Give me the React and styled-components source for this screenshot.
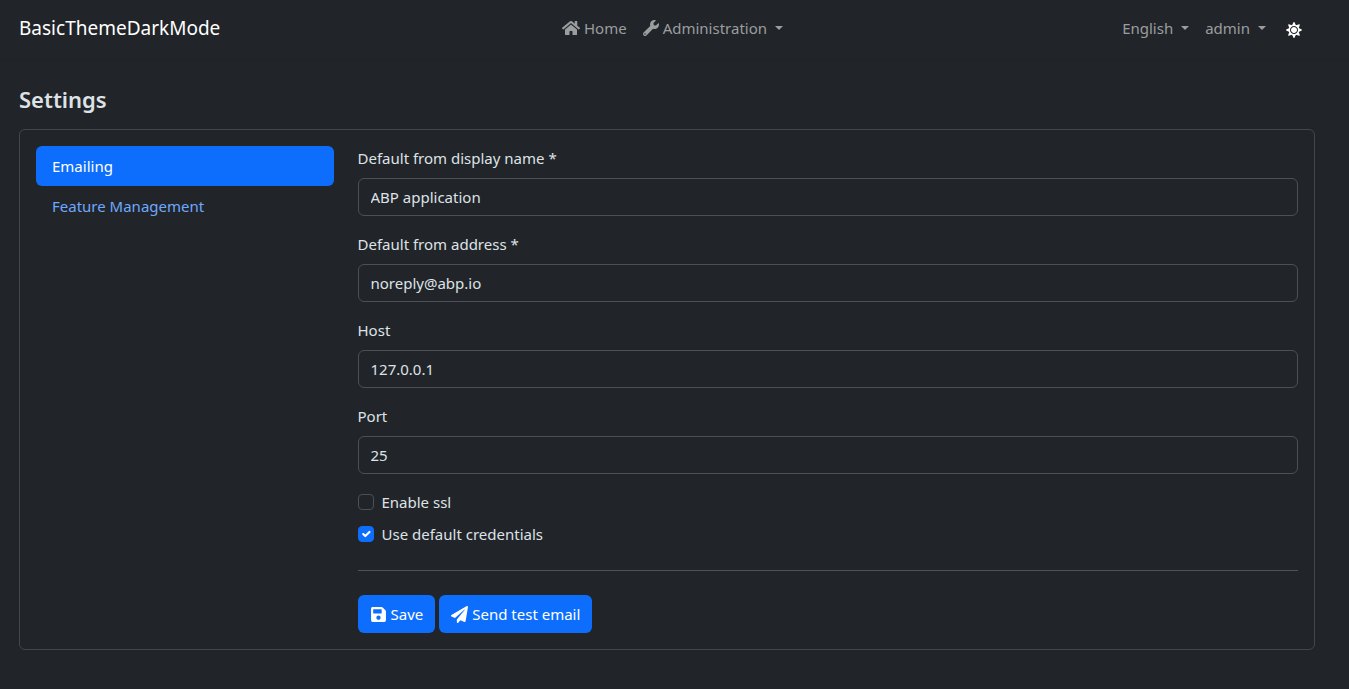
import React from "react";
import styled, { createGlobalStyle } from "styled-components";
import { FaHome, FaWrench, FaSave, FaPaperPlane, FaSun } from "react-icons/fa";

const GlobalStyle = createGlobalStyle`
  *, *::before, *::after { box-sizing: border-box; }
  body {
    margin: 0;
    background: #212529;
    color: #dee2e6;
    font-family: "Segoe UI", "Noto Sans", sans-serif;
    font-size: 15px;
    line-height: 24px;
  }
  input, button { font: inherit; }
`;

const Navbar = styled.header`
  display: grid;
  grid-template-columns: 1fr auto 1fr;
  align-items: center;
  height: 60px;
  padding: 0 23px 4px 19px;
  border-bottom: 1px solid #1f2327;
`;

const Brand = styled.a`
  color: #fff;
  font-size: 19px;
  line-height: 30px;
  text-decoration: none;
`;

const NavGroup = styled.nav`
  display: flex;
  align-items: center;
  justify-content: ${(p) => (p.$end ? "flex-end" : "center")};
  gap: 16px;
`;

const navItem = `
  display: flex;
  align-items: center;
  padding: 0;
  border: 0;
  background: none;
  color: #9b9d9f;
  text-decoration: none;
  cursor: pointer;
`;

const NavLink = styled.a`
  ${navItem}
  gap: 4px;
`;

const NavToggle = styled.button`
  ${navItem}
  gap: 4px;

  &::after {
    content: "";
    margin-left: 4px;
    border-top: 4px solid;
    border-left: 4px solid transparent;
    border-right: 4px solid transparent;
  }
`;

const ThemeButton = styled.button`
  ${navItem}
  padding: 4px 24px 0 4px;
  color: #fff;
`;

const Page = styled.main`
  padding: 24px 34px 24px 19px;
`;

const Title = styled.h1`
  margin: 0 0 14px;
  font-size: 22px;
  font-weight: 600;
  line-height: 31px;
`;

const Card = styled.section`
  display: grid;
  grid-template-columns: repeat(12, minmax(0, 1fr));
  column-gap: 24px;
  padding: 16px;
  border: 1px solid #43474b;
  border-radius: 6px;
`;

const Tabs = styled.nav`
  grid-column: span 3;
`;

const Tab = styled.a`
  display: block;
  padding: 8px 16px;
  border-radius: 6px;
  background: ${(p) => (p.$active ? "#0d6efd" : "transparent")};
  color: ${(p) => (p.$active ? "#fff" : "#6ea8fe")};
  text-decoration: none;
`;

const Form = styled.form`
  grid-column: span 9;
`;

const Field = styled.div`
  margin-bottom: 16px;
`;

const Label = styled.label`
  display: block;
  margin-bottom: 8px;
`;

const TextInput = styled.input`
  display: block;
  width: 100%;
  height: 38px;
  padding: 6px 12px;
  border: 1px solid #495057;
  border-radius: 6px;
  background: #212529;
  color: #dee2e6;
  outline: none;

  &:focus { border-color: #86b7fe; }
`;

const CheckRow = styled.div`
  display: flex;
  align-items: center;
  gap: 8px;
  margin-bottom: 8px;
`;

const CheckControl = styled.span`
  display: grid;

  > * { grid-area: 1 / 1; }
`;

const Checkbox = styled.input`
  appearance: none;
  width: 16px;
  height: 16px;
  margin: 0;
  border: 1px solid #495057;
  border-radius: 4px;
  background: #212529;

  &:checked {
    border-color: #0d6efd;
    background: #0d6efd;
  }

  & + svg { visibility: hidden; }
  &:checked + svg { visibility: visible; }
`;

const CheckMark = styled.svg`
  width: 14px;
  height: 14px;
  place-self: center;
  pointer-events: none;
`;

const Divider = styled.hr`
  margin: 24px 0;
  border: 0;
  border-top: 1px solid #505458;
`;

const Actions = styled.div`
  display: flex;
  gap: 4px;
`;

const Button = styled.button`
  display: flex;
  align-items: center;
  gap: 4px;
  height: 38px;
  padding: 0 12px;
  border: 0;
  border-radius: 6px;
  background: #0d6efd;
  color: #fff;
  cursor: pointer;
`;

const fields = [
  { id: "display-name", label: "Default from display name *", value: "ABP application" },
  { id: "address", label: "Default from address *", value: "noreply@abp.io" },
  { id: "host", label: "Host", value: "127.0.0.1" },
  { id: "port", label: "Port", value: "25" },
];

const checks = [
  { id: "ssl", label: "Enable ssl", checked: false },
  { id: "credentials", label: "Use default credentials", checked: true },
];

export default function App() {
  return (
    <>
      <GlobalStyle />
      <Navbar>
        <div>
          <Brand href="#">BasicThemeDarkMode</Brand>
        </div>
        <NavGroup>
          <NavLink href="#"><FaHome size={18} />Home</NavLink>
          <NavToggle type="button"><FaWrench size={16} />Administration</NavToggle>
        </NavGroup>
        <NavGroup $end>
          <NavToggle type="button">English</NavToggle>
          <NavToggle type="button">admin</NavToggle>
          <ThemeButton type="button" aria-label="Toggle theme"><FaSun size={16} /></ThemeButton>
        </NavGroup>
      </Navbar>
      <Page>
        <Title>Settings</Title>
        <Card>
          <Tabs>
            <Tab href="#" $active>Emailing</Tab>
            <Tab href="#">Feature Management</Tab>
          </Tabs>
          <Form onSubmit={(e) => e.preventDefault()}>
            {fields.map((f) => (
              <Field key={f.id}>
                <Label htmlFor={f.id}>{f.label}</Label>
                <TextInput id={f.id} type="text" defaultValue={f.value} />
              </Field>
            ))}
            {checks.map((c) => (
              <CheckRow key={c.id}>
                <CheckControl>
                  <Checkbox id={c.id} type="checkbox" defaultChecked={c.checked} />
                  <CheckMark viewBox="0 0 20 20" aria-hidden="true">
                    <path d="m6 10 3 3 6-6" fill="none" stroke="#fff" strokeWidth="3" strokeLinecap="round" strokeLinejoin="round" />
                  </CheckMark>
                </CheckControl>
                <label htmlFor={c.id}>{c.label}</label>
              </CheckRow>
            ))}
            <Divider />
            <Actions>
              <Button type="submit"><FaSave size={17} />Save</Button>
              <Button type="button"><FaPaperPlane size={17} />Send test email</Button>
            </Actions>
          </Form>
        </Card>
      </Page>
    </>
  );
}
